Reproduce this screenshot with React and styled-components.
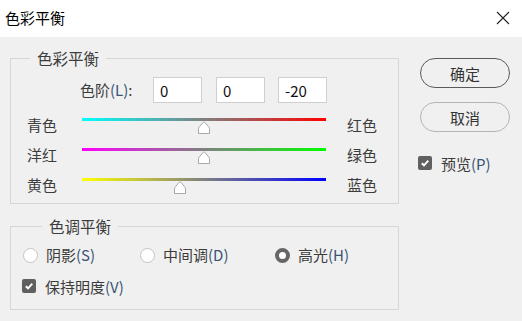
import React from 'react';
import styled, { createGlobalStyle } from 'styled-components';

const GlobalStyle = createGlobalStyle`
  html, body {
    margin: 0;
    padding: 0;
    background: #f0f0f0;
  }
  body {
    font-family: "Noto Sans CJK SC", "Noto Sans", sans-serif;
    font-size: 15px;
    color: #3c3c3c;
  }
`;

const sliders = [
  { left: '青色', right: '红色', from: '#00ffff', to: '#ff0000', value: 0 },
  { left: '洋红', right: '绿色', from: '#ff00ff', to: '#00ff00', value: 0 },
  { left: '黄色', right: '蓝色', from: '#ffff00', to: '#0000ff', value: -20 },
];

const TRACK_WIDTH = 244;

function Thumb({ value }) {
  const left = ((value + 100) / 200) * TRACK_WIDTH - 7;
  return (
    <ThumbIcon style={{ left }} width="14" height="13" viewBox="0 0 14 13">
      <path
        d="M1.5 12.5 L1.5 7.8 Q1.5 6.8 2.3 5.9 L6.2 1.3 Q7 0.5 7.8 1.3 L11.7 5.9 Q12.5 6.8 12.5 7.8 L12.5 12.5 Z"
        fill="#fff"
        stroke="#a9a9a9"
        strokeWidth="1"
      />
    </ThumbIcon>
  );
}

function CheckBox() {
  return (
    <Check>
      <svg width="10" height="10" viewBox="0 0 10 10">
        <path d="M1.8 5.2 L4 7.3 L8.3 2.6" fill="none" stroke="#fff" strokeWidth="1.9" />
      </svg>
    </Check>
  );
}

export default function App() {
  return (
    <Dialog>
      <GlobalStyle />
      <TitleBar>
        <span>色彩平衡</span>
        <CloseIcon width="14" height="14" viewBox="0 0 14 14">
          <path d="M1 1 L13 13 M13 1 L1 13" stroke="#222" strokeWidth="1.1" />
        </CloseIcon>
      </TitleBar>
      <Body>
        <LeftCol>
          <Group $pad="9px 0 10px 0">
            <Legend>色彩平衡</Legend>
            <LevelsRow>
              <LevelsLabel>
                色阶<Key>(L)</Key>:
              </LevelsLabel>
              <NumBox $gap="0">0</NumBox>
              <NumBox $gap="14px">0</NumBox>
              <NumBox $gap="13px">-20</NumBox>
            </LevelsRow>
            <Sliders>
              {sliders.map((s) => (
                <SliderRow key={s.left}>
                  <SideLabel $w="55px">{s.left}</SideLabel>
                  <Track>
                    <Bar $from={s.from} $to={s.to} />
                    <Thumb value={s.value} />
                  </Track>
                  <SideLabel $w="auto" $ml="21px">{s.right}</SideLabel>
                </SliderRow>
              ))}
            </Sliders>
          </Group>
          <Group $pad="9px 0 13px 12px" $mt="12px">
            <Legend>色调平衡</Legend>
            <RadioRow>
              <RadioItem $w="117px">
                <Radio />
                <span>阴影<Key>(S)</Key></span>
              </RadioItem>
              <RadioItem $w="135px">
                <Radio />
                <span>中间调<Key>(D)</Key></span>
              </RadioItem>
              <RadioItem $w="auto">
                <Radio $checked />
                <span>高光<Key>(H)</Key></span>
              </RadioItem>
            </RadioRow>
            <CheckRow>
              <CheckBox />
              <span>保持明度<Key>(V)</Key></span>
            </CheckRow>
          </Group>
        </LeftCol>
        <RightCol>
          <PillButton $primary>确定</PillButton>
          <PillButton>取消</PillButton>
          <PreviewRow>
            <CheckBox />
            <span>预览<Key>(P)</Key></span>
          </PreviewRow>
        </RightCol>
      </Body>
    </Dialog>
  );
}

const Dialog = styled.div`
  width: 522px;
  height: 321px;
  background: #f0f0f0;
  overflow: hidden;
`;

const TitleBar = styled.div`
  height: 37px;
  background: #fff;
  display: flex;
  align-items: center;
  justify-content: space-between;
  padding: 0 12px 0 5px;
  color: #000;
  font-size: 15px;
  span {
    margin-top: -3px;
  }
`;

const CloseIcon = styled.svg`
  display: block;
  margin-top: -2px;
`;

const Body = styled.div`
  display: flex;
  align-items: flex-start;
`;

const LeftCol = styled.div`
  width: 389px;
  padding: 11px 0 0 10px;
  display: flex;
  flex-direction: column;
`;

const Group = styled.fieldset`
  margin: ${(p) => p.$mt || '0'} 0 0 0;
  padding: ${(p) => p.$pad};
  border: 1px solid #d6d6d6;
  min-width: 0;
`;

const Legend = styled.legend`
  margin-left: 19px;
  padding: 0 7px;
  font-size: 15.5px;
  line-height: 20px;
  height: 20px;
`;

const Key = styled.span`
  color: #3a5474;
`;

const LevelsRow = styled.div`
  display: flex;
  align-items: center;
  padding-left: 69px;
  height: 26px;
`;

const LevelsLabel = styled.div`
  width: 73px;
  font-size: 15px;
  line-height: 20px;
`;

const NumBox = styled.div`
  box-sizing: border-box;
  width: 49px;
  height: 26px;
  margin-left: ${(p) => p.$gap};
  background: #fff;
  border: 1px solid #cfcfcf;
  padding: 0 6px;
  display: flex;
  align-items: center;
  font-size: 15px;
  color: #111;
`;

const Sliders = styled.div`
  margin-top: 15px;
  display: flex;
  flex-direction: column;
  gap: 15px;
  padding-left: 16px;
`;

const SliderRow = styled.div`
  display: flex;
  align-items: center;
  height: 15px;
`;

const SideLabel = styled.div`
  width: ${(p) => p.$w};
  margin-left: ${(p) => p.$ml || '0'};
  font-size: 15px;
  line-height: 20px;
  margin-top: -1px;
`;

const Track = styled.div`
  position: relative;
  width: ${TRACK_WIDTH}px;
  height: 15px;
`;

const Bar = styled.div`
  height: 3px;
  background: linear-gradient(to right, ${(p) => p.$from}, #808080, ${(p) => p.$to});
`;

const ThumbIcon = styled.svg`
  position: absolute;
  top: 3px;
  display: block;
`;

const RadioRow = styled.div`
  display: flex;
  align-items: center;
  height: 20px;
`;

const RadioItem = styled.label`
  width: ${(p) => p.$w};
  display: flex;
  align-items: center;
  gap: 8px;
  font-size: 15px;
  line-height: 20px;
`;

const Radio = styled.span`
  box-sizing: border-box;
  width: 15px;
  height: 15px;
  border-radius: 50%;
  flex: none;
  background: #fff;
  border: ${(p) => (p.$checked ? '4.5px solid #666' : '1px solid #c4c4c4')};
`;

const CheckRow = styled.div`
  margin-top: 11px;
  display: flex;
  align-items: center;
  gap: 9px;
  height: 20px;
  margin-left: -1px;
  font-size: 15px;
`;

const Check = styled.span`
  width: 14px;
  height: 14px;
  border-radius: 2px;
  background: #606060;
  display: flex;
  align-items: center;
  justify-content: center;
  flex: none;
`;

const RightCol = styled.div`
  margin-left: 21px;
  padding-top: 21px;
  display: flex;
  flex-direction: column;
  align-items: flex-start;
  gap: 14px;
`;

const PillButton = styled.div`
  box-sizing: border-box;
  width: 90px;
  height: 30px;
  border-radius: 15px;
  border: 1px solid ${(p) => (p.$primary ? '#5a5a5a' : '#b4b4b4')};
  display: flex;
  align-items: center;
  justify-content: center;
  font-size: 15px;
  color: #333;
`;

const PreviewRow = styled.div`
  margin-top: 7px;
  margin-left: -2px;
  display: flex;
  align-items: center;
  gap: 9px;
  height: 20px;
  font-size: 15px;
`;
